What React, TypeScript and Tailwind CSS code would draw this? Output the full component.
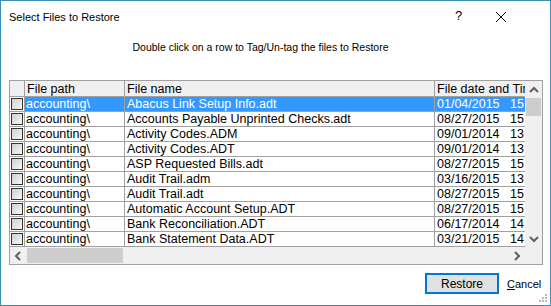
import React from "react";

const rows: [string, string, string, string][] = [
  ["accounting\\", "Abacus Link Setup Info.adt", "01/04/2015", "15"],
  ["accounting\\", "Accounts Payable Unprinted Checks.adt", "08/27/2015", "15"],
  ["accounting\\", "Activity Codes.ADM", "09/01/2014", "13"],
  ["accounting\\", "Activity Codes.ADT", "09/01/2014", "13"],
  ["accounting\\", "ASP Requested Bills.adt", "08/27/2015", "15"],
  ["accounting\\", "Audit Trail.adm", "03/16/2015", "13"],
  ["accounting\\", "Audit Trail.adt", "08/27/2015", "15"],
  ["accounting\\", "Automatic Account Setup.ADT", "08/27/2015", "15"],
  ["accounting\\", "Bank Reconciliation.ADT", "06/17/2014", "14"],
  ["accounting\\", "Bank Statement Data.ADT", "03/21/2015", "14"],
];

const Chevron = ({ dir }: { dir: "up" | "down" | "left" | "right" }) => {
  const d = {
    up: "M1 6 L5 2 L9 6",
    down: "M1 2 L5 6 L9 2",
    left: "M6 1 L2 5 L6 9",
    right: "M3 1 L7 5 L3 9",
  }[dir];
  const vert = dir === "up" || dir === "down";
  return (
    <svg width={vert ? 10 : 9} height={vert ? 8 : 10} viewBox={vert ? "0 0 10 8" : "0 0 9 10"}>
      <path d={d} fill="none" stroke="#606060" strokeWidth="2" />
    </svg>
  );
};

const Checkbox = () => (
  <div className="w-[12px] h-[12px] border border-[#333333] bg-gradient-to-br from-[#cfcfcf] to-[#f8f8f8]" />
);

export default function App() {
  const body = { fontFamily: '"Liberation Sans", Arial, sans-serif' };
  return (
    <div
      className="relative w-[551px] h-[306px] border border-[#3a8fb8] bg-white flex flex-col text-black"
      style={body}
    >
      {/* title bar */}
      <div className="h-[30px] flex items-center pl-[8px] relative">
        <span className="text-[11px] leading-[14px] pt-[2px]">Select Files to Restore</span>
        <span className="absolute left-[454px] top-[8px] text-[13px] leading-[14px]">?</span>
        <svg className="absolute left-[494px] top-[10px]" width="12" height="12" viewBox="0 0 12 12">
          <path d="M1 1 L11 11 M11 1 L1 11" stroke="#000" strokeWidth="1" />
        </svg>
      </div>
      {/* instruction */}
      <div className="h-[49px] pt-[9px] pr-[30px] text-center text-[10.5px] leading-[14px]">
        Double click on a row to Tag/Un-tag the files to Restore
      </div>
      {/* table */}
      <div className="ml-[8px] w-[534px] h-[185px] border border-[#a0a0a0] flex flex-col">
        <div className="flex h-[166px]">
          <div className="w-[515px] overflow-hidden text-[12.5px] leading-[14px]">
            <div className="flex h-[16px] bg-[#f0f0f0] border-b border-[#a0a0a0]">
              <div className="w-[15px] shrink-0 border-r border-[#a0a0a0]" />
              <div className="w-[100px] shrink-0 border-r border-[#a0a0a0] pl-[2px] pt-[1px] whitespace-nowrap">File path</div>
              <div className="w-[310px] shrink-0 border-r border-[#a0a0a0] pl-[2px] pt-[1px] whitespace-nowrap">File name</div>
              <div className="w-[130px] shrink-0 pl-[2px] pt-[1px] whitespace-nowrap">File date and Time</div>
            </div>
            {rows.map((r, i) => {
              const sel = i === 0;
              const cell = sel ? "bg-[#3399ff] text-white" : "bg-white";
              return (
                <div key={i} className="flex h-[15px] border-b border-[#a0a0a0]">
                  <div className="w-[15px] shrink-0 border-r border-[#a0a0a0] bg-white flex items-center pl-[1px]">
                    <Checkbox />
                  </div>
                  <div className={`w-[100px] shrink-0 border-r border-[#a0a0a0] pl-[1px] whitespace-nowrap overflow-hidden ${cell}`}>{r[0]}</div>
                  <div className={`w-[310px] shrink-0 border-r border-[#a0a0a0] pl-[2px] whitespace-nowrap overflow-hidden ${cell}`}>{r[1]}</div>
                  <div className={`w-[130px] shrink-0 pl-[2px] flex whitespace-nowrap ${cell}`}>
                    <span className="w-[73px] shrink-0">{r[2]}</span>
                    <span>{r[3]}</span>
                  </div>
                </div>
              );
            })}
          </div>
          {/* vertical scrollbar */}
          <div className="w-[17px] bg-[#f0f0f0] flex flex-col items-center">
            <div className="h-[17px] flex items-center justify-center">
              <Chevron dir="up" />
            </div>
            <div className="w-[15px] h-[18px] bg-[#cdcdcd]" />
            <div className="flex-1" />
            <div className="h-[17px] flex items-center justify-center">
              <Chevron dir="down" />
            </div>
          </div>
        </div>
        {/* horizontal scrollbar */}
        <div className="flex h-[17px] bg-[#f0f0f0]">
          <div className="w-[515px] flex items-center">
            <div className="w-[17px] h-[17px] flex items-center justify-center">
              <Chevron dir="left" />
            </div>
            <div className="w-[96px] h-[15px] bg-[#cdcdcd]" />
            <div className="flex-1" />
            <div className="w-[17px] h-[17px] flex items-center justify-center">
              <Chevron dir="right" />
            </div>
          </div>
          <div className="w-[17px] bg-[#f0f0f0]" />
        </div>
      </div>
      {/* buttons */}
      <div className="flex items-center mt-[8px] pl-[424px]">
        <button className="w-[74px] h-[21px] border-2 border-[#0078d7] bg-[#e1e1e1] text-[12px] leading-[14px]">
          Restore
        </button>
        <span className="ml-[8px] text-[11px] leading-[14px]">
          <span className="underline">C</span>ancel
        </span>
      </div>
      {/* resize grip */}
      <svg className="absolute right-[2px] bottom-[2px]" width="10" height="10" viewBox="0 0 10 10">
        <rect x="7" y="1" width="2" height="2" fill="#b8b8b8" />
        <rect x="4" y="4" width="2" height="2" fill="#b8b8b8" />
        <rect x="7" y="4" width="2" height="2" fill="#b8b8b8" />
        <rect x="1" y="7" width="2" height="2" fill="#b8b8b8" />
        <rect x="4" y="7" width="2" height="2" fill="#b8b8b8" />
        <rect x="7" y="7" width="2" height="2" fill="#b8b8b8" />
      </svg>
    </div>
  );
}
